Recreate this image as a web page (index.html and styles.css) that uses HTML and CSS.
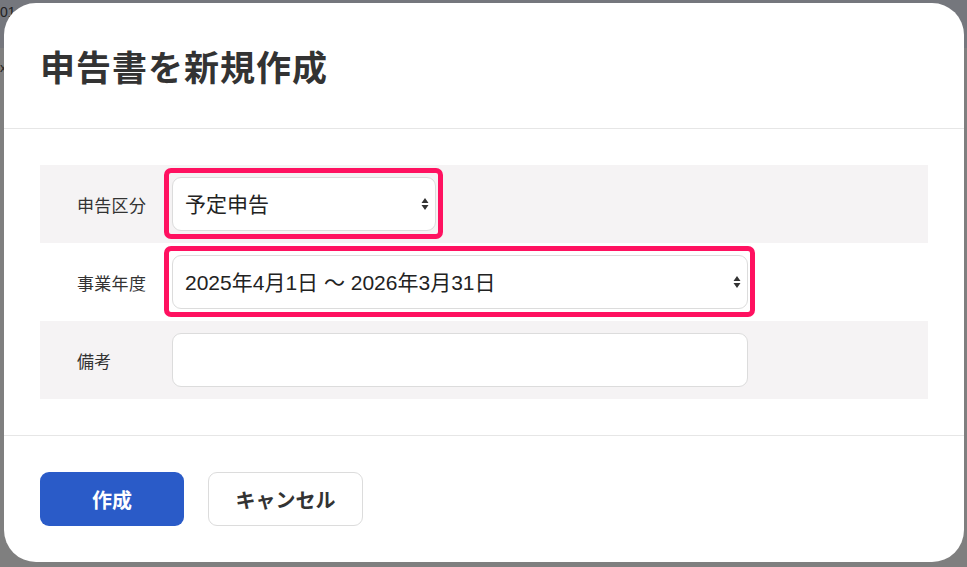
FILE: index.html
```html
<!DOCTYPE html>
<html lang="ja">
<head>
<meta charset="utf-8">
<title>申告書を新規作成</title>
<link rel="stylesheet" href="styles.css">
</head>
<body>
<div class="page">
  <div class="page-header"><span class="page-crumb">01</span></div>
  <div class="page-side"><span class="page-close">x</span></div>
</div>

<div class="modal" role="dialog" aria-labelledby="modal-title">
  <header class="modal-header">
    <h1 id="modal-title" class="modal-title">申告書を新規作成</h1>
  </header>

  <div class="modal-body">
    <div class="form-row shaded">
      <label class="form-label" for="kind">申告区分</label>
      <div class="field">
        <div class="select-wrap short highlight">
          <select id="kind" class="control">
            <option>予定申告</option>
          </select>
          <svg class="select-arrows" width="8" height="14" viewBox="0 0 8 14" aria-hidden="true">
            <path d="M4 1 L7.5 6 H0.5 Z M4 13 L7.5 8 H0.5 Z" fill="#333"/>
          </svg>
        </div>
      </div>
    </div>

    <div class="form-row">
      <label class="form-label" for="term">事業年度</label>
      <div class="field">
        <div class="select-wrap highlight">
          <select id="term" class="control">
            <option>2025年4月1日 ～ 2026年3月31日</option>
          </select>
          <svg class="select-arrows" width="8" height="14" viewBox="0 0 8 14" aria-hidden="true">
            <path d="M4 1 L7.5 6 H0.5 Z M4 13 L7.5 8 H0.5 Z" fill="#333"/>
          </svg>
        </div>
      </div>
    </div>

    <div class="form-row shaded">
      <label class="form-label" for="note">備考</label>
      <div class="field">
        <input id="note" class="control text-input" type="text">
      </div>
    </div>
  </div>

  <footer class="modal-footer">
    <button class="btn btn-primary" type="button">作成</button>
    <button class="btn btn-secondary" type="button">キャンセル</button>
  </footer>
</div>
</body>
</html>
```

FILE: styles.css
```css
* {
  box-sizing: border-box;
}

html, body {
  margin: 0;
  height: 100%;
}

body {
  background: #7f7f7f;
  font-family: "Liberation Sans", "Noto Sans CJK JP", sans-serif;
  color: #333;
  overflow: hidden;
}

/* dimmed page behind the dialog */
.page {
  height: 100%;
  display: flex;
  flex-direction: column;
}

.page-header {
  height: 48px;
  background: #75777d;
  padding: 4px 0 0 0;
  font-size: 14px;
  color: #222;
}

.page-side {
  padding: 12px 0 0 0;
  font-size: 13px;
  color: #222;
}

/* dialog */
.modal {
  position: absolute;
  left: 4px;
  top: 3px;
  width: 960px;
  height: 559px;
  background: #fff;
  border-radius: 32px;
  display: flex;
  flex-direction: column;
}

.modal-header {
  height: 127px;
  display: flex;
  align-items: center;
  padding: 0 36px;
  border-bottom: 1px solid #e6e6e6;
}

.modal-title {
  margin: 0;
  font-family: "Noto Sans CJK JP", sans-serif;
  font-size: 35px;
  font-weight: 700;
  color: #333;
  letter-spacing: 1px;
}

.modal-body {
  padding: 36px 36px;
  border-bottom: 1px solid #e6e6e6;
}

.form-row {
  display: grid;
  grid-template-columns: 132px 1fr;
  align-items: center;
  padding: 12px 0;
}

.form-row.shaded {
  background: #f5f3f4;
}

.form-label {
  padding-left: 37px;
  font-family: "Noto Sans CJK JP", sans-serif;
  font-size: 17px;
  letter-spacing: 0.3px;
  color: #333;
}

.field {
  display: flex;
}

.select-wrap {
  position: relative;
  width: 576px;
}

.select-wrap.short {
  width: 264px;
}

.control {
  display: block;
  width: 576px;
  height: 54px;
  border: 1px solid #dcdcdc;
  border-radius: 9px;
  background: #fff;
  font-family: "Liberation Sans", "Noto Sans CJK JP", sans-serif;
  font-size: 21px;
  color: #222;
  padding: 0 30px 0 12px;
  outline: none;
}

select.control {
  -webkit-appearance: none;
  appearance: none;
  width: 100%;
}

.highlight::after {
  content: "";
  position: absolute;
  inset: -9px -7px -8px -8px;
  border: 5px solid #ff1160;
  border-radius: 7px;
  pointer-events: none;
}

.select-arrows {
  position: absolute;
  right: 7px;
  top: 20px;
  pointer-events: none;
}

.modal-footer {
  flex: 1;
  display: flex;
  align-items: flex-start;
  gap: 24px;
  padding: 36px 36px;
}

.btn {
  height: 54px;
  border-radius: 9px;
  font-family: "Noto Sans CJK JP", sans-serif;
  font-size: 20px;
  font-weight: 700;
  cursor: pointer;
}

.btn-primary {
  width: 144px;
  background: #2a5bc8;
  border: 0;
  color: #fff;
}

.btn-secondary {
  width: 155px;
  background: #fff;
  border: 1px solid #dcdcdc;
  color: #333;
}
```
